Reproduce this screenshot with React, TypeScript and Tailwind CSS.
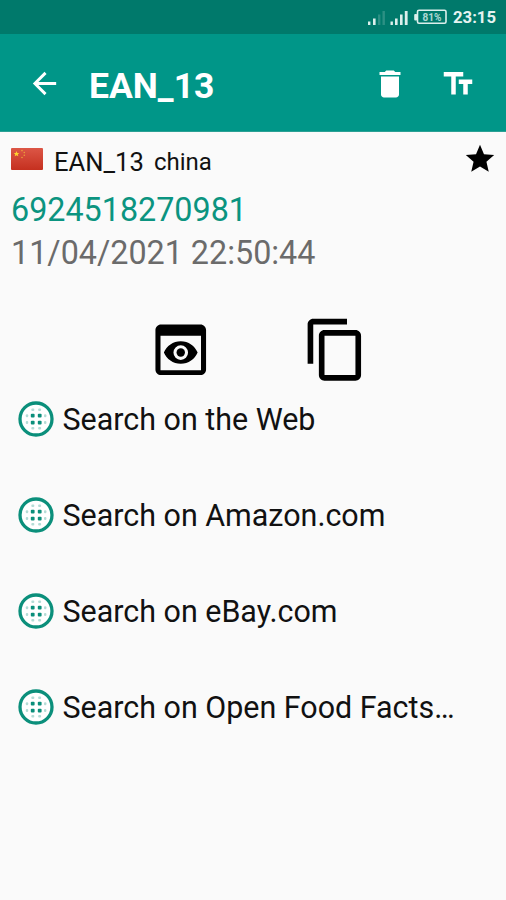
const actions = ['Search on the Web', 'Search on Amazon.com', 'Search on eBay.com', 'Search on Open Food Facts…'];

function StatusBar() {
  return (
    <div className="flex h-[34px] items-center bg-[#00796b] pl-[367px] text-[#e6f3f1]">
      <svg width="84" height="34" viewBox="0 0 84 34" fill="#dcefec">
        <rect x="1" y="21.5" width="2.4" height="3.5" />
        <rect x="6" y="18.5" width="2.6" height="6.5" />
        <rect x="11" y="14.5" width="2.4" height="10.5" opacity=".2" />
        <rect x="15.5" y="11" width="2.4" height="14" opacity=".2" />
        <rect x="23.5" y="21.5" width="2.4" height="3.5" />
        <rect x="28" y="18.5" width="2.6" height="6.5" />
        <rect x="33" y="14.5" width="2.6" height="10.5" />
        <rect x="37.8" y="11" width="2.8" height="14" />
        <rect x="47.2" y="14" width="3" height="6.5" rx="1" />
        <rect x="50.5" y="10.2" width="28.5" height="13" rx="1.5" fill="none" stroke="#dcefec" strokeWidth="1.6" />
        <text x="65" y="20.5" textAnchor="middle" fontSize="10" fontWeight="700" opacity=".8" fontFamily="Roboto, sans-serif">81%</text>
      </svg>
      <span className="ml-[2px] mt-[3px] text-[16.7px] font-bold leading-none">23:15</span>
    </div>
  );
}

function Flag() {
  return (
    <svg width="32" height="22" viewBox="0 0 32 22" className="mt-[16px]">
      <defs>
        <linearGradient id="flagRed" x1="0" y1="0" x2="0" y2="1">
          <stop offset="0" stopColor="#dc5646" />
          <stop offset="1" stopColor="#c5301f" />
        </linearGradient>
      </defs>
      <rect width="32" height="22" rx="1" fill="url(#flagRed)" />
      <path d="M5.5 3l.8 1.9 2 .1-1.5 1.3.5 2-1.8-1.1-1.8 1.1.5-2L2.7 5l2-.1z" fill="#ffd22e" />
      <g fill="#eaa03a">
        <circle cx="11" cy="2.6" r=".8" />
        <circle cx="13.3" cy="4.5" r=".8" />
        <circle cx="13.3" cy="7.3" r=".8" />
        <circle cx="11" cy="9.5" r=".8" />
      </g>
    </svg>
  );
}

function GlobeDots() {
  return (
    <svg width="36" height="36" viewBox="-18 -18 36 36" className="shrink-0" fill="#0b8f7b">
      <circle r="16" fill="white" stroke="#0b8f7b" strokeWidth="3.3" />
      <rect x="-5.2" y="-5.2" width="3.8" height="3.8" rx="1" />
      <rect x="1.8" y="-5.2" width="3.8" height="3.8" rx="1" />
      <rect x="-5.2" y="1.8" width="3.8" height="3.8" rx="1" />
      <rect x="1.8" y="1.8" width="3.8" height="3.8" rx="1" />
      <g opacity=".3">
        <rect x="-4.7" y="-10.5" width="3" height="2.4" rx="1" />
        <rect x="2.1" y="-10.5" width="3" height="2.4" rx="1" />
        <rect x="-4.7" y="8" width="3" height="2.4" rx="1" />
        <rect x="2.1" y="8" width="3" height="2.4" rx="1" />
        <rect x="-10.2" y="-4.7" width="2.4" height="3" rx="1" />
        <rect x="-10.2" y="2.1" width="2.4" height="3" rx="1" />
        <rect x="8" y="-4.7" width="2.4" height="3" rx="1" />
        <rect x="8" y="2.1" width="2.4" height="3" rx="1" />
      </g>
    </svg>
  );
}

export default function App() {
  return (
    <div className="flex h-[900px] w-[506px] flex-col overflow-hidden bg-[#fafafa] font-['Roboto',sans-serif] text-[#111]">
      <StatusBar />
      <header className="flex h-[98px] items-start border-b border-[#2ba094] bg-[#009688] text-white">
        <svg width="35" height="35" viewBox="0 0 24 24" fill="currentColor" className="ml-[27px] mt-[32px]">
          <path d="M20 11H7.83l5.59-5.59L12 4l-8 8 8 8 1.41-1.41L7.83 13H20v-2z" />
        </svg>
        <h1 className="ml-[27px] mt-[32px] w-[283px] text-[35.5px] font-bold leading-[40px]">EAN_13</h1>
        <svg width="36" height="36" viewBox="0 0 24 24" fill="currentColor" className="mt-[32px]">
          <path d="M6 19c0 1.1.9 2 2 2h8c1.1 0 2-.9 2-2V7H6v12zM19 4h-3.5l-1-1h-5l-1 1H5v2h14V4z" />
        </svg>
        <svg width="36" height="36" viewBox="0 0 24 24" fill="currentColor" className="ml-[32px] mt-[32px]">
          <path d="M2.5 4v3h5v12h3V7h5V4h-13zm19 5h-9v3h3v7h3v-7h3V9z" />
        </svg>
      </header>
      <section className="flex h-[57px] items-start pl-[11px]">
        <Flag />
        <span className="ml-[11px] mt-[15px] w-[100px] text-[25.6px] leading-[30px]">EAN_13</span>
        <span className="mt-[15px] w-[309px] text-[24px] leading-[30px]">china</span>
        <svg width="34" height="34" viewBox="0 0 24 24" fill="black" className="mt-[10px]">
          <path d="M12 17.27L18.18 21l-1.64-7.03L22 9.24l-7.19-.61L12 2 9.19 8.63 2 9.24l5.46 4.73L5.82 21z" />
        </svg>
      </section>
      <section className="h-[127px] pl-[11px] text-[32.3px] leading-[43px]">
        <p className="text-[#0b9480]">6924518270981</p>
        <p className="text-[#6b6b6b]">11/04/2021 22:50:44</p>
      </section>
      <section className="flex h-[55px] gap-[87px] pl-[147px]">
        <svg width="67.5" height="67.5" viewBox="0 0 24 24" fill="black" className="shrink-0">
          <path d="M19 3H5c-1.11 0-2 .9-2 2v14c0 1.1.89 2 2 2h14c1.1 0 2-.9 2-2V5c0-1.1-.89-2-2-2zm0 16.3H4.8V7h14.4v12.3zM12 9c-2.73 0-5.06 1.66-6 4 .94 2.34 3.27 4 6 4s5.06-1.66 6-4c-.94-2.34-3.27-4-6-4zm0 6.6a2.6 2.6 0 1 1 0-5.2 2.6 2.6 0 0 1 0 5.2z" fillRule="evenodd" />
          <circle cx="12" cy="13" r="1.5" />
        </svg>
        <svg width="67.5" height="67.5" viewBox="0 0 24 24" fill="black" className="shrink-0">
          <path d="M16 1H4c-1.1 0-2 .9-2 2v14h2V3h12V1zm3 4H8c-1.1 0-2 .9-2 2v14c0 1.1.9 2 2 2h11c1.1 0 2-.9 2-2V7c0-1.1-.9-2-2-2zm0 16H8V7h11v14z" />
        </svg>
      </section>
      <ul>
        {actions.map((label) => (
          <li key={label} className="flex h-24 items-center gap-[9px] pl-[17.5px]">
            <GlobeDots />
            <span className="mt-[2px] whitespace-nowrap text-[30.45px] leading-[36px]">{label}</span>
          </li>
        ))}
      </ul>
    </div>
  );
}
